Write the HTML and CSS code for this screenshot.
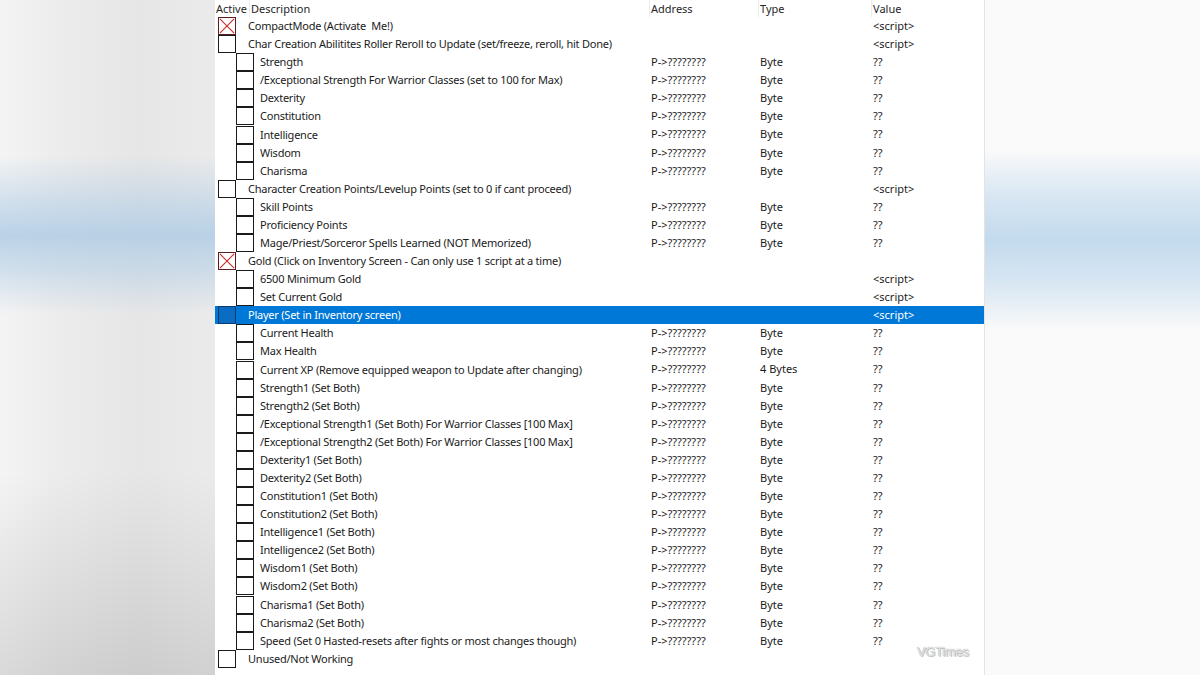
FILE: index.html
```html
<!DOCTYPE html>
<html>
<head>
<meta charset="utf-8">
<link rel="stylesheet" href="styles.css">
</head>
<body>
<div class="side left"></div>
<main class="panel">
  <div class="head">
    <div class="hc hc-active">Active</div>
    <div class="hc hc-desc">Description</div>
    <div class="hc hc-addr">Address</div>
    <div class="hc hc-type">Type</div>
    <div class="hc hc-val">Value</div>
  </div>
  <div class="rows">
    <div class="row l0"><div class="d"><span class="cb on"><svg viewBox="0 0 18 18"><path d="M1 1L17 17M17 1L1 17"/></svg></span><span class="t">CompactMode (Activate&nbsp; Me!)</span></div><div class="c"></div><div class="c"></div><div class="c">&lt;script&gt;</div></div>
    <div class="row l0"><div class="d"><span class="cb"></span><span class="t">Char Creation Abilitites Roller Reroll to Update (set/freeze, reroll, hit Done)</span></div><div class="c"></div><div class="c"></div><div class="c">&lt;script&gt;</div></div>
    <div class="row l1"><div class="d"><span class="cb"></span><span class="t">Strength</span></div><div class="c">P-&gt;????????</div><div class="c">Byte</div><div class="c">??</div></div>
    <div class="row l1"><div class="d"><span class="cb"></span><span class="t">/Exceptional Strength For Warrior Classes (set to 100 for Max)</span></div><div class="c">P-&gt;????????</div><div class="c">Byte</div><div class="c">??</div></div>
    <div class="row l1"><div class="d"><span class="cb"></span><span class="t">Dexterity</span></div><div class="c">P-&gt;????????</div><div class="c">Byte</div><div class="c">??</div></div>
    <div class="row l1"><div class="d"><span class="cb"></span><span class="t">Constitution</span></div><div class="c">P-&gt;????????</div><div class="c">Byte</div><div class="c">??</div></div>
    <div class="row l1"><div class="d"><span class="cb"></span><span class="t">Intelligence</span></div><div class="c">P-&gt;????????</div><div class="c">Byte</div><div class="c">??</div></div>
    <div class="row l1"><div class="d"><span class="cb"></span><span class="t">Wisdom</span></div><div class="c">P-&gt;????????</div><div class="c">Byte</div><div class="c">??</div></div>
    <div class="row l1"><div class="d"><span class="cb"></span><span class="t">Charisma</span></div><div class="c">P-&gt;????????</div><div class="c">Byte</div><div class="c">??</div></div>
    <div class="row l0"><div class="d"><span class="cb"></span><span class="t">Character Creation Points/Levelup Points (set to 0 if cant proceed)</span></div><div class="c"></div><div class="c"></div><div class="c">&lt;script&gt;</div></div>
    <div class="row l1"><div class="d"><span class="cb"></span><span class="t">Skill Points</span></div><div class="c">P-&gt;????????</div><div class="c">Byte</div><div class="c">??</div></div>
    <div class="row l1"><div class="d"><span class="cb"></span><span class="t">Proficiency Points</span></div><div class="c">P-&gt;????????</div><div class="c">Byte</div><div class="c">??</div></div>
    <div class="row l1"><div class="d"><span class="cb"></span><span class="t">Mage/Priest/Sorceror Spells Learned (NOT Memorized)</span></div><div class="c">P-&gt;????????</div><div class="c">Byte</div><div class="c">??</div></div>
    <div class="row l0"><div class="d"><span class="cb on"><svg viewBox="0 0 18 18"><path d="M1 1L17 17M17 1L1 17"/></svg></span><span class="t">Gold (Click on Inventory Screen - Can only use 1 script at a time)</span></div><div class="c"></div><div class="c"></div><div class="c"></div></div>
    <div class="row l1"><div class="d"><span class="cb"></span><span class="t">6500 Minimum Gold</span></div><div class="c"></div><div class="c"></div><div class="c">&lt;script&gt;</div></div>
    <div class="row l1"><div class="d"><span class="cb"></span><span class="t">Set Current Gold</span></div><div class="c"></div><div class="c"></div><div class="c">&lt;script&gt;</div></div>
    <div class="row l0 sel"><div class="d"><span class="cb"></span><span class="t">Player (Set in Inventory screen)</span></div><div class="c"></div><div class="c"></div><div class="c">&lt;script&gt;</div></div>
    <div class="row l1"><div class="d"><span class="cb"></span><span class="t">Current Health</span></div><div class="c">P-&gt;????????</div><div class="c">Byte</div><div class="c">??</div></div>
    <div class="row l1"><div class="d"><span class="cb"></span><span class="t">Max Health</span></div><div class="c">P-&gt;????????</div><div class="c">Byte</div><div class="c">??</div></div>
    <div class="row l1"><div class="d"><span class="cb"></span><span class="t">Current XP (Remove equipped weapon to Update after changing)</span></div><div class="c">P-&gt;????????</div><div class="c">4 Bytes</div><div class="c">??</div></div>
    <div class="row l1"><div class="d"><span class="cb"></span><span class="t">Strength1 (Set Both)</span></div><div class="c">P-&gt;????????</div><div class="c">Byte</div><div class="c">??</div></div>
    <div class="row l1"><div class="d"><span class="cb"></span><span class="t">Strength2 (Set Both)</span></div><div class="c">P-&gt;????????</div><div class="c">Byte</div><div class="c">??</div></div>
    <div class="row l1"><div class="d"><span class="cb"></span><span class="t">/Exceptional Strength1 (Set Both) For Warrior Classes [100 Max]</span></div><div class="c">P-&gt;????????</div><div class="c">Byte</div><div class="c">??</div></div>
    <div class="row l1"><div class="d"><span class="cb"></span><span class="t">/Exceptional Strength2 (Set Both) For Warrior Classes [100 Max]</span></div><div class="c">P-&gt;????????</div><div class="c">Byte</div><div class="c">??</div></div>
    <div class="row l1"><div class="d"><span class="cb"></span><span class="t">Dexterity1 (Set Both)</span></div><div class="c">P-&gt;????????</div><div class="c">Byte</div><div class="c">??</div></div>
    <div class="row l1"><div class="d"><span class="cb"></span><span class="t">Dexterity2 (Set Both)</span></div><div class="c">P-&gt;????????</div><div class="c">Byte</div><div class="c">??</div></div>
    <div class="row l1"><div class="d"><span class="cb"></span><span class="t">Constitution1 (Set Both)</span></div><div class="c">P-&gt;????????</div><div class="c">Byte</div><div class="c">??</div></div>
    <div class="row l1"><div class="d"><span class="cb"></span><span class="t">Constitution2 (Set Both)</span></div><div class="c">P-&gt;????????</div><div class="c">Byte</div><div class="c">??</div></div>
    <div class="row l1"><div class="d"><span class="cb"></span><span class="t">Intelligence1 (Set Both)</span></div><div class="c">P-&gt;????????</div><div class="c">Byte</div><div class="c">??</div></div>
    <div class="row l1"><div class="d"><span class="cb"></span><span class="t">Intelligence2 (Set Both)</span></div><div class="c">P-&gt;????????</div><div class="c">Byte</div><div class="c">??</div></div>
    <div class="row l1"><div class="d"><span class="cb"></span><span class="t">Wisdom1 (Set Both)</span></div><div class="c">P-&gt;????????</div><div class="c">Byte</div><div class="c">??</div></div>
    <div class="row l1"><div class="d"><span class="cb"></span><span class="t">Wisdom2 (Set Both)</span></div><div class="c">P-&gt;????????</div><div class="c">Byte</div><div class="c">??</div></div>
    <div class="row l1"><div class="d"><span class="cb"></span><span class="t">Charisma1 (Set Both)</span></div><div class="c">P-&gt;????????</div><div class="c">Byte</div><div class="c">??</div></div>
    <div class="row l1"><div class="d"><span class="cb"></span><span class="t">Charisma2 (Set Both)</span></div><div class="c">P-&gt;????????</div><div class="c">Byte</div><div class="c">??</div></div>
    <div class="row l1"><div class="d"><span class="cb"></span><span class="t">Speed (Set 0 Hasted-resets after fights or most changes though)</span></div><div class="c">P-&gt;????????</div><div class="c">Byte</div><div class="c">??</div></div>
    <div class="row l0"><div class="d"><span class="cb"></span><span class="t">Unused/Not Working</span></div><div class="c"></div><div class="c"></div><div class="c"></div></div>
  </div>
  <div class="watermark">VGTimes</div>
</main>
<div class="side right"></div>
</body>
</html>
```
FILE: styles.css
```css
html, body {
  margin: 0;
  padding: 0;
  width: 1200px;
  height: 675px;
  overflow: hidden;
}
body {
  display: flex;
  font-family: "Noto Sans", "Open Sans", sans-serif;
  font-size: 11px;
  color: #1b1b1b;
}
.side {
  height: 675px;
}
.side.left {
  width: 215px;
  background:
    linear-gradient(180deg, rgba(178,205,230,0) 155px, rgba(178,205,230,0.5) 200px, rgba(176,204,229,0.85) 235px, rgba(178,205,230,0.5) 272px, rgba(178,205,230,0) 315px),
    linear-gradient(180deg, rgba(0,0,0,0) 470px, rgba(0,0,0,0.11) 675px),
    linear-gradient(90deg, #f4f4f4 0px, #ececec 60px, #e6e6e6 140px, #ebebeb 215px);
}
.side.right {
  flex: 1;
  background:
    linear-gradient(180deg, rgba(195,218,238,0) 150px, rgba(195,218,238,0.6) 195px, rgba(192,216,237,0.95) 240px, rgba(195,218,238,0.6) 285px, rgba(195,218,238,0) 330px),
    #fafafa;
}
.panel {
  position: relative;
  width: 769px;
  height: 675px;
  background: #fff;
  border-right: 1px solid #e3e3e3;
  box-sizing: content-box;
}
.head {
  display: grid;
  grid-template-columns: 34px 400px 109px 113px 1fr;
  height: 17px;
  line-height: 17px;
  color: #262626;
}
.hc {
  padding-left: 1px;
  border-left: 1px solid #ececec;
  white-space: nowrap;
}
.hc-active {
  border-left: none;
}
.rows {
  display: flex;
  flex-direction: column;
}
.row {
  display: grid;
  grid-template-columns: 434px 109px 113px 1fr;
  height: 18.09px;
  line-height: 18px;
  white-space: nowrap;
}
.row .c {
  padding-left: 2px;
}
.d {
  display: flex;
  align-items: center;
}
.t {
  letter-spacing: -0.23px;
}
.cb {
  width: 18px;
  height: 18px;
  box-sizing: border-box;
  border: 1px solid #1a1a1a;
  background: #fff;
  flex: none;
  display: flex;
}
.cb svg {
  width: 16px;
  height: 16px;
}
.cb svg path {
  stroke: #c62828;
  stroke-width: 1.2;
  fill: none;
}
.cb.on {
  border-color: #5b1d1d;
}
.l0 .d { padding-left: 3px; }
.l0 .t { margin-left: 12px; }
.l1 .d { padding-left: 21px; }
.l1 .t { margin-left: 6px; }
.sel {
  background: #0078d7;
  color: #fff;
}
.sel .cb {
  background: #0a6cc2;
  border-color: #0b3a66;
}
.watermark {
  position: absolute;
  left: 702px;
  top: 644px;
  font-family: "Liberation Sans", sans-serif;
  font-size: 13px;
  letter-spacing: -0.3px;
  color: #e4e4e4;
  text-shadow: 0 0 1px #9a9a9a, 1px 1px 0 #c8c8c8;
}
```
